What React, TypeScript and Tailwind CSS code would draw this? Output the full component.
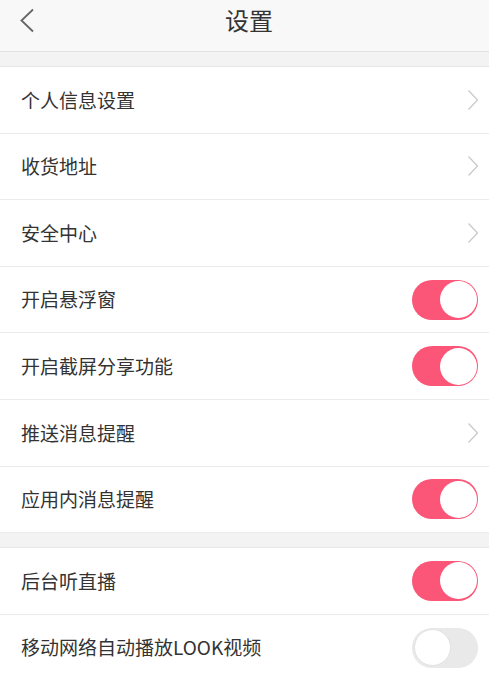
import { ReactNode } from "react";

type Item = { label: string; kind: "link" | "on" | "off" };

const groupOne: Item[] = [
  { label: "个人信息设置", kind: "link" },
  { label: "收货地址", kind: "link" },
  { label: "安全中心", kind: "link" },
  { label: "开启悬浮窗", kind: "on" },
  { label: "开启截屏分享功能", kind: "on" },
  { label: "推送消息提醒", kind: "link" },
  { label: "应用内消息提醒", kind: "on" },
];

const groupTwo: Item[] = [
  { label: "后台听直播", kind: "on" },
  { label: "移动网络自动播放LOOK视频", kind: "off" },
];

function Chevron() {
  return (
    <svg width="12" height="22" viewBox="0 0 12 22" fill="none">
      <path d="M1.5 1.5 L10.5 11 L1.5 20.5" stroke="#cacaca" strokeWidth="1.3" />
    </svg>
  );
}

function Toggle({ on }: { on: boolean }) {
  return on ? (
    <div className="flex h-[40px] w-[66px] items-center justify-end rounded-full bg-[#fb5677] p-[1.5px]">
      <div className="h-[37px] w-[37px] rounded-full bg-white" />
    </div>
  ) : (
    <div className="flex h-[40px] w-[66px] items-center justify-start rounded-full bg-[#e9e9e9] p-[1.5px]">
      <div className="h-[37px] w-[37px] rounded-full border border-[#e2e2e2] bg-white" />
    </div>
  );
}

function Row({ item }: { item: Item }) {
  let right: ReactNode;
  if (item.kind === "link") right = <div className="mr-[-1px]"><Chevron /></div>;
  else right = <Toggle on={item.kind === "on"} />;
  return (
    <div className="flex h-[66.6px] items-center justify-between border-b border-[#ebebeb] bg-white pl-[21px] pr-[11px]">
      <span className="text-[19px] text-[#333]">{item.label}</span>
      {right}
    </div>
  );
}

export default function App() {
  return (
    <div
      className="h-[674px] w-[489px] overflow-hidden bg-[#f3f3f3]"
      style={{ fontFamily: '"Noto Sans CJK SC", "Noto Sans", sans-serif' }}
    >
      <header className="relative flex h-[52px] items-start justify-center border-b border-[#e2e2e2] bg-[#f8f8f8] pl-[9px] pt-[3px]">
        <div className="absolute left-[19px] top-[8px]">
          <svg width="16" height="25" viewBox="0 0 16 25" fill="none">
            <path d="M14 1.5 L2.5 12.5 L14 23.5" stroke="#666" strokeWidth="1.8" />
          </svg>
        </div>
        <h1 className="text-[24px] leading-[34px] text-[#333]">设置</h1>
      </header>

      <div className="mt-[14px] border-t border-[#e6e6e6]">
        {groupOne.map((item) => (
          <Row key={item.label} item={item} />
        ))}
      </div>

      <div className="mt-[14px] border-t border-[#e6e6e6]">
        {groupTwo.map((item) => (
          <Row key={item.label} item={item} />
        ))}
      </div>
    </div>
  );
}
